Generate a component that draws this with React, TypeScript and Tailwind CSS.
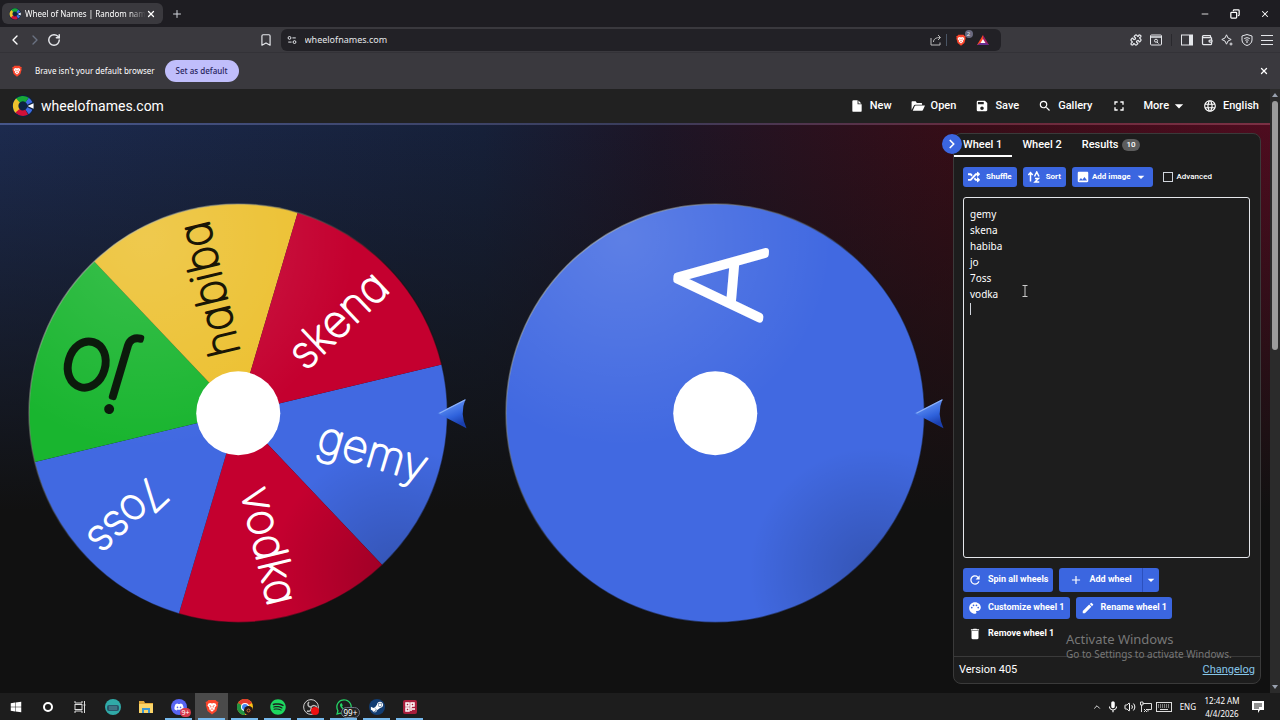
import * as React from "react";
import {
  Bookmark,
  ChevronLeft,
  ChevronRight,
  ChevronUp,
  Copy,
  Minus,
  Plus,
  Puzzle,
  RotateCw,
  Volume2,
  Wallet,
  X,
} from "lucide-react";
import { FaDiscord, FaRandom, FaSteamSymbol, FaSpotify, FaWhatsapp, FaWindows } from "react-icons/fa";
import {
  MdArrowDropDown,
  MdAdd,
  MdDelete,
  MdEdit,
  MdFullscreen,
  MdImage,
  MdLanguage,
  MdMic,
  MdPalette,
  MdRefresh,
  MdSave,
  MdSearch,
} from "react-icons/md";

type Slice = {
  label: string;
  fill: string;
  ink: string;
  size: number;
  stroke: number;
  end: number;
  baseline: number;
};

const BLUE = "#4169e1";
const RED = "#c4002f";

const SLICES: Slice[] = [
  { label: "gemy", fill: BLUE, ink: "#fff", size: 44, stroke: 2, end: 196, baseline: 14 },
  { label: "vodka", fill: RED, ink: "#fff", size: 44, stroke: 2, end: 196, baseline: 16 },
  { label: "7oss", fill: BLUE, ink: "#fff", size: 43, stroke: 2, end: 196, baseline: 16 },
  { label: "jo", fill: "#19b52f", ink: "#0c1a0c", size: 86, stroke: 6, end: 184, baseline: 27 },
  { label: "habiba", fill: "#ecc02f", ink: "#1a1606", size: 44, stroke: 2, end: 196, baseline: 16 },
  { label: "skena", fill: RED, ink: "#fff", size: 44, stroke: 2, end: 196, baseline: 16 },
];

const SECOND: Slice[] = [
  { label: "A", fill: BLUE, ink: "#fff", size: 118, stroke: 7, end: 169, baseline: 36 },
];

const RADIUS = 209;

function slicePath(from: number, to: number) {
  const a = (from * Math.PI) / 180;
  const b = (to * Math.PI) / 180;
  return `M0 0L${RADIUS * Math.cos(a)} ${RADIUS * Math.sin(a)}A${RADIUS} ${RADIUS} 0 0 1 ${
    RADIUS * Math.cos(b)
  } ${RADIUS * Math.sin(b)}Z`;
}

function Wheel({ id, slices, turn }: { id: string; slices: Slice[]; turn: number }) {
  const step = 360 / slices.length;
  return (
    <svg viewBox="-238 -220 476 440" className="w-full" role="img" aria-label={id}>
      <defs>
        <radialGradient id={`${id}-light`} cx="0.28" cy="0.08" r="0.5">
          <stop offset="0" stopColor="#fff" stopOpacity="0.15" />
          <stop offset="1" stopColor="#fff" stopOpacity="0" />
        </radialGradient>
        <radialGradient id={`${id}-shade`} cx="0.88" cy="0.88" r="0.3">
          <stop offset="0" stopColor="#000" stopOpacity="0.2" />
          <stop offset="1" stopColor="#000" stopOpacity="0" />
        </radialGradient>
        <linearGradient id={`${id}-rim`} x1="0" y1="0" x2="1" y2="1">
          <stop offset="0.1" stopColor="#d6dccb" stopOpacity="0.5" />
          <stop offset="0.5" stopColor="#111" stopOpacity="0.5" />
        </linearGradient>
        <linearGradient id={`${id}-pin`} x1="0" y1="0" x2="0.4" y2="1">
          <stop offset="0.3" stopColor="#5b8bf0" />
          <stop offset="0.7" stopColor="#2f62dc" />
          <stop offset="1" stopColor="#1a3fae" />
        </linearGradient>
      </defs>
      {slices.length === 1 ? (
        <circle r={RADIUS} fill={slices[0].fill} />
      ) : (
        slices.map((slice, i) => (
          <path
            key={slice.label}
            d={slicePath(turn + step * (i - 0.5), turn + step * (i + 0.5))}
            fill={slice.fill}
          />
        ))
      )}
      <circle r={RADIUS} fill={`url(#${id}-light)`} />
      <circle r={RADIUS} fill={`url(#${id}-shade)`} />
      <circle r={RADIUS} fill="none" stroke={`url(#${id}-rim)`} strokeWidth="1.500" />
      {slices.map((slice, i) => (
        <text
          key={slice.label}
          x={slice.end}
          y={slice.baseline}
          textAnchor="end"
          transform={`rotate(${turn + step * i})`}
          fontSize={slice.size}
          fill={slice.ink}
          stroke={slice.ink}
          strokeWidth={slice.stroke}
          strokeLinejoin="round"
          className="font-['Inter',sans-serif] font-thin [font-feature-settings:'cv11']"
        >
          {slice.label}
        </text>
      ))}
      <circle r="42" fill="#fff" />
      <path d="M199 0L227 -14Q221 0 228 15Z" fill={`url(#${id}-pin)`} />
      <path d="M201 0L227 -13.500" stroke="#8fb2f7" strokeWidth="1" />
    </svg>
  );
}

function SiteLogo({ className }: { className: string }) {
  return (
    <svg viewBox="0 0 24 24" className={className} aria-hidden="true">
      <circle cx="12" cy="12" r="12" fill="#0d2340" />
      <g fill="none" strokeWidth="6">
        <path d="M16.500 5.500A8 8 0 0 1 16.500 18.500" stroke="#3f6be2" />
        <path d="M6 6.500A8 8 0 0 1 16.500 5.500" stroke="#16a838" />
        <path d="M6.800 18A8 8 0 0 1 6.500 6" stroke="#eec22d" />
        <path d="M16 18.800A8 8 0 0 1 6 17.200" stroke="#d0103a" />
      </g>
      <path d="M14 12L24 7V17Z" fill="#0d2340" />
      <path d="M17 12L23.500 9V15Z" fill="#fff" />
    </svg>
  );
}

function Lion({ className }: { className: string }) {
  return (
    <svg viewBox="0 0 16 16" className={className} aria-hidden="true">
      <path
        d="M4.500 1H11.500L13 2.500L14.500 3L13.800 5L14.200 6L12.500 12L8 15.500L3.500 12L1.800 6L2.200 5L1.500 3L3 2.500Z"
        fill="#fb452b"
      />
      <path
        d="M4.500 4.500L6.500 4L8 4.500L9.500 4L11.500 4.500L12.500 6.500L10.500 9L11 10L8 12.800L5 10L5.500 9L3.500 6.500Z"
        fill="#fff"
      />
      <path
        d="M5.500 6.500L7 7.200L6.800 8.500M10.500 6.500L9 7.200L9.200 8.500M6.700 10.500L8 9.800L9.300 10.500"
        fill="none"
        stroke="#fb452b"
        strokeWidth="0.800"
      />
    </svg>
  );
}

function BrowserChrome() {
  return (
    <div className="bg-[#3a393e] font-['Noto_Sans',sans-serif] text-white">
      <div className="flex h-[27px] items-center bg-[#1e1d22] pl-0.5">
        <div className="flex h-[21px] w-[161px] items-center rounded-md bg-[#3a393e] px-[7px]">
          <SiteLogo className="h-3 w-3 shrink-0" />
          <span className="ml-1 flex-1 whitespace-nowrap text-[8px] leading-4 [mask-image:linear-gradient(to_right,#000_85%,transparent)]">
            Wheel of Names | Random nam
          </span>
          <button type="button" aria-label="Close tab">
            <X className="h-2.5 w-2.5" strokeWidth={3} />
          </button>
        </div>
        <button type="button" aria-label="New tab" className="ml-2 text-gray-300">
          <Plus className="h-3 w-3" />
        </button>
        <div className="ml-auto flex items-center gap-5 pr-2.5">
          <Minus className="h-2.5 w-2.5" />
          <Copy className="h-2.5 w-2.5 -scale-x-100" strokeWidth={3} />
          <X className="h-2.5 w-2.5" strokeWidth={2.5} />
        </div>
      </div>

      <div className="flex h-[26px] items-center border-b border-[#333237] px-[7px] text-gray-200">
        <button type="button" aria-label="Back">
          <ChevronLeft className="h-4 w-4 text-white" />
        </button>
        <button type="button" aria-label="Forward" className="ml-1 text-gray-500">
          <ChevronRight className="h-4 w-4" />
        </button>
        <button type="button" aria-label="Reload" className="ml-1">
          <RotateCw className="h-3.5 w-3.5" strokeWidth={2.5} />
        </button>
        <div className="flex flex-1 items-center justify-center">
          <button type="button" aria-label="Bookmark" className="mr-2 pl-[68px]">
            <Bookmark className="h-3.5 w-3.5" />
          </button>
          <div className="flex h-[22px] w-[720px] items-center rounded-md bg-[#222126] px-1.5">
            <svg viewBox="0 0 12 12" className="h-2.5 w-2.5" fill="none" stroke="currentColor" strokeWidth="1.200">
              <circle cx="3" cy="3.500" r="1.700" />
              <path d="M6.500 3.500H10.500M1.500 8.500H5.500" />
              <circle cx="9" cy="8.500" r="1.700" />
            </svg>
            <input
              aria-label="Address"
              defaultValue="wheelofnames.com"
              className="ml-2 flex-1 bg-transparent text-[9px] leading-4 outline-none"
            />
            <svg viewBox="0 0 12 12" className="h-3 w-3" fill="none" stroke="#bbb" strokeWidth="1">
              <path d="M1 4V11H10V8.500M3.500 8C3.500 5 6 3.500 10 3.500M8 1L10.500 3.500L8 6" />
            </svg>
            <span className="mx-1 h-3 w-px bg-gray-600" />
            <span className="relative ml-1">
              <Lion className="h-3 w-3" />
              <span className="absolute -right-1.5 -top-1 grid h-2 w-2 place-items-center rounded-full bg-[#6a6a80] text-[6px] leading-none">
                2
              </span>
            </span>
            <svg viewBox="0 0 12 12" className="ml-2.5 mr-1.5 h-3 w-3">
              <path d="M6 1L0 11H6V7Z" fill="#ff4724" />
              <path d="M6 1L12 11H6V7Z" fill="#9e1f63" />
              <path d="M0 11H12L9 9H3Z" fill="#662d91" />
              <path d="M6 5L8.500 9H3.500Z" fill="#fff" />
            </svg>
          </div>
        </div>
        <div className="flex items-center gap-2">
          <Puzzle className="h-3 w-3" strokeWidth={2.5} />
          <svg viewBox="0 0 12 12" className="h-3 w-3" fill="none" stroke="currentColor">
            <rect x="0.500" y="1" width="11" height="10" rx="1" />
            <path d="M1 3H11" strokeWidth="1.500" />
            <circle cx="6" cy="6.700" r="1.500" />
            <path d="M7 8L8.500 9.500" />
          </svg>
          <span className="mx-px h-3 w-px bg-[#29282d]" />
          <svg viewBox="0 0 12 12" className="h-3 w-3" fill="none" stroke="currentColor">
            <rect x="0.500" y="1" width="11" height="10" />
            <path d="M8 1H12V11H8Z" fill="currentColor" stroke="none" />
          </svg>
          <Wallet className="h-3 w-3" strokeWidth={2.5} />
          <svg viewBox="0 0 12 12" className="h-3 w-3" fill="none" stroke="currentColor">
            <path d="M5.500 0.800Q6.200 4.800 10.200 5.500Q6.200 6.200 5.500 10.200Q4.800 6.200 0.800 5.500Q4.800 4.800 5.500 0.800Z" />
            <path d="M10 8.500V11.500M8.500 10H11.500" />
          </svg>
          <svg viewBox="0 0 12 12" className="h-3 w-3" fill="none" stroke="currentColor">
            <path d="M6 0.500L11 2V6C11 9 8.500 10.800 6 11.500C3.500 10.800 1 9 1 6V2Z" />
            <path d="M3.200 4.500Q6 2.800 8.800 4.500M4.300 6.300Q6 5.300 7.700 6.300" />
            <circle cx="6" cy="8" r="0.500" />
          </svg>
          <svg viewBox="0 0 12 12" className="h-3 w-3" stroke="currentColor">
            <path d="M0 1.500H12M0 6.500H12M0 10.500H12" />
          </svg>
        </div>
      </div>

      <div className="flex h-9 items-center px-[11px]">
        <Lion className="h-3 w-3" />
        <span className="ml-3 text-[8px] leading-4">Brave isn't your default browser</span>
        <button
          type="button"
          className="ml-2.5 h-[22px] rounded-full bg-[#c0befb] px-[11px] text-[8px] font-medium text-[#26235c]"
        >
          Set as default
        </button>
        <button type="button" aria-label="Dismiss" className="ml-auto">
          <X className="h-2.5 w-2.5" strokeWidth={3} />
        </button>
      </div>
    </div>
  );
}

function SiteHeader() {
  return (
    <header className="flex h-[34px] items-center bg-[#212121] pb-px pl-3 pr-[11px] text-white">
      <SiteLogo className="h-[22px] w-[22px]" />
      <a href="#home" className="ml-[7px] text-[14px] leading-5">
        wheelofnames.com
      </a>
      <nav className="ml-auto flex items-center text-[11px] font-medium leading-4">
        <button type="button" className="mr-[19px] flex items-center gap-1.5">
          <svg viewBox="0 0 24 24" className="h-3.5 w-3.5" fill="currentColor">
            <path d="M6 2H13V9H20V20Q20 22 18 22H6Q4 22 4 20V4Q4 2 6 2ZM14.500 2.500L19.500 7.500H14.500Z" />
          </svg>
          New
        </button>
        <button type="button" className="mr-[19px] flex items-center gap-1.5">
          <svg viewBox="0 0 24 24" className="h-3.5 w-3.5" fill="currentColor">
            <path d="M1 19V5Q1 4 2 4H8L10 7H18Q19 7 19 8V10H7Q5.500 10 5 11ZM3 20L6.500 12Q7 11 8 11H24L20.500 19Q20 20 19 20Z" />
          </svg>
          Open
        </button>
        <button type="button" className="mr-[19px] flex items-center gap-1.5">
          <MdSave className="h-3.5 w-3.5" /> Save
        </button>
        <button type="button" className="mr-[19px] flex items-center gap-1.5">
          <MdSearch className="h-3.5 w-3.5" /> Gallery
        </button>
        <button type="button" aria-label="Fullscreen" className="mr-4">
          <MdFullscreen className="h-4 w-4" />
        </button>
        <button type="button" className="mr-3.5 flex items-center">
          More <MdArrowDropDown className="h-5 w-5" />
        </button>
        <button type="button" className="flex items-center gap-1.5">
          <MdLanguage className="h-3.5 w-3.5" /> English
        </button>
      </nav>
    </header>
  );
}

const NAMES = ["gemy", "skena", "habiba", "jo", "7oss", "vodka", ""].join("\n");

function Panel() {
  const [names, setNames] = React.useState(NAMES);

  return (
    <aside className="relative mr-[9px] mt-2 flex w-[308px] shrink-0 flex-col self-stretch rounded-lg border border-[#3a3a3a] bg-[#1d1d1d] text-white">
      <button
        type="button"
        aria-label="Hide panel"
        className="absolute -left-3 top-0 grid h-5 w-5 place-items-center rounded-full bg-[#3b66e0]"
      >
        <ChevronRight className="h-3.5 w-3.5" strokeWidth={3} />
      </button>
      <div role="tablist" className="flex h-[23px] text-[11px] font-medium leading-5">
        <button type="button" role="tab" aria-selected="true" className="border-b-2 border-white pl-[9px] pr-2.5">
          Wheel 1
        </button>
        <button type="button" role="tab" aria-selected="false" className="ml-2.5 border-b-2 border-transparent">
          Wheel 2
        </button>
        <button
          type="button"
          role="tab"
          aria-selected="false"
          className="ml-5 flex items-center gap-1 border-b-2 border-transparent"
        >
          Results
          <span className="rounded-full bg-[#5c5c5c] px-1 text-[8px] leading-3">10</span>
        </button>
      </div>

      <div className="flex flex-1 flex-col pl-[9px] pr-2.5 pt-2.5">
        <div className="flex h-5 items-center gap-1.5 text-[8px] font-bold">
          <button type="button" className="flex h-5 items-center gap-1.5 rounded-[3px] bg-[#3b66e0] px-[5px]">
            <FaRandom className="h-3 w-3" /> Shuffle
          </button>
          <button type="button" className="flex h-5 items-center gap-1.5 rounded-[3px] bg-[#3b66e0] px-[5px]">
            <svg viewBox="0 0 24 24" className="h-3 w-3" fill="none" stroke="currentColor" strokeWidth="3">
              <path d="M5 21V4M0.500 8L5 3L9.500 8M13 11L17.500 2L22 11M14 15H21L14 22H22.500" />
            </svg>
            Sort
          </button>
          <button type="button" className="flex h-5 items-center gap-0.5 rounded-[3px] bg-[#3b66e0] px-1">
            <MdImage className="h-3.5 w-3.5" /> Add image <MdArrowDropDown className="h-4 w-4" />
          </button>
          <label className="ml-1 flex items-center gap-1 font-medium">
            <input type="checkbox" className="h-2.5 w-2.5 appearance-none border border-gray-300" />
            Advanced
          </label>
        </div>

        <div className="relative mt-2.5 flex flex-1">
          <textarea
            aria-label="Names"
            value={names}
            onChange={(event) => setNames(event.target.value)}
            className="w-full resize-none rounded-[3px] border border-gray-200 bg-[#1d1d1d] px-1.5 py-2 font-['Noto_Sans',sans-serif] text-[10px] leading-4 outline-none"
          />
          <span className="absolute left-[7px] top-[106px] h-3 w-px bg-gray-300" />
          <svg viewBox="0 0 6 12" className="absolute left-[59px] top-[88px] h-3 w-1.5" fill="none" stroke="#ccc">
            <path d="M0.500 0.500H5.500M0.500 11.500H5.500M3 0.500V11.500" />
          </svg>
        </div>

        <div className="mt-2.5 flex gap-1.5 text-[9px] font-bold">
          <button type="button" className="flex h-6 items-center gap-1.5 rounded-[3px] bg-[#3b66e0] px-[5px]">
            <MdRefresh className="h-3.5 w-3.5" /> Spin all wheels
          </button>
          <div className="flex rounded-[3px] bg-[#3b66e0]">
            <button type="button" className="flex h-6 items-center gap-1.5 px-2.5">
              <MdAdd className="h-3.5 w-3.5" /> Add wheel
            </button>
            <button type="button" aria-label="More wheel options" className="border-l border-[#2c50bd]">
              <MdArrowDropDown className="h-4 w-4" />
            </button>
          </div>
        </div>
        <div className="mt-[5px] flex gap-1.5 text-[9px] font-bold">
          <button type="button" className="flex h-[22px] items-center gap-1.5 rounded-[3px] bg-[#3b66e0] px-[5px]">
            <MdPalette className="h-3.5 w-3.5" /> Customize wheel 1
          </button>
          <button type="button" className="flex h-[22px] items-center gap-1.5 rounded-[3px] bg-[#3b66e0] px-[5px]">
            <MdEdit className="h-3.5 w-3.5" /> Rename wheel 1
          </button>
        </div>
        <button type="button" className="mb-3 mt-[5px] flex h-5 items-center gap-1.5 px-[5px] text-[9px] font-bold">
          <MdDelete className="h-3.5 w-3.5" /> Remove wheel 1
        </button>
      </div>

      <div className="flex h-[27px] items-center justify-between border-t border-[#3a3a3a] px-[5px] text-[11px]">
        <span>Version 405</span>
        <a href="#changelog" className="text-[#85c5e8] underline">
          Changelog
        </a>
      </div>

      <div className="pointer-events-none absolute bottom-[22px] left-[112px] whitespace-nowrap font-['Noto_Sans',sans-serif] text-[#777]">
        <p className="text-[13px] leading-4">Activate Windows</p>
        <p className="text-[10px] leading-[14px]">Go to Settings to activate Windows.</p>
      </div>
    </aside>
  );
}

function TaskItem({ label, active, children }: { label: string; active?: boolean; children: React.ReactNode }) {
  return (
    <button
      type="button"
      aria-label={label}
      className={`relative grid h-full w-[33px] place-items-center ${active ? "bg-[#4a4a4a]" : ""}`}
    >
      {children}
      <span className="absolute inset-x-[3px] bottom-0 h-0.5 bg-[#76b9ed]" />
    </button>
  );
}

function Taskbar() {
  return (
    <footer className="flex h-[27px] items-center bg-[#1d1d1d] font-['Noto_Sans',sans-serif] text-white">
      <button type="button" aria-label="Start" className="grid w-8 place-items-center">
        <FaWindows className="h-3 w-3" />
      </button>
      <button type="button" aria-label="Cortana" className="grid w-8 place-items-center">
        <span className="h-2.5 w-2.5 rounded-full border-2 border-white" />
      </button>
      <button type="button" aria-label="Task view" className="grid w-8 place-items-center">
        <svg viewBox="0 0 12 12" className="h-3 w-3" fill="none" stroke="#ddd">
          <path d="M1 0V2H8V0M1 12V10H8V12M10.500 0V12M9.500 4H11.500" />
          <rect x="1" y="3.500" width="7" height="5" />
        </svg>
      </button>
      <button type="button" aria-label="Browser" className="grid w-[33px] place-items-center">
        <svg viewBox="0 0 16 16" className="h-4 w-4">
          <circle cx="8" cy="8" r="8" fill="#30aaa8" />
          <rect x="2" y="6" width="12" height="6" rx="2" fill="#28566a" />
          <path d="M4 8H12M4 10H12" stroke="#598d9b" />
        </svg>
      </button>
      <button type="button" aria-label="File Explorer" className="grid w-[33px] place-items-center">
        <svg viewBox="0 0 16 14" className="h-3.5 w-4">
          <path d="M1 1H6L7 3H15V13H1Z" fill="#e2a93b" />
          <path d="M1 4H15V13H1Z" fill="#fbd569" />
          <path d="M4 13V8H12V13H10V10H6V13Z" fill="#3b97d3" />
        </svg>
      </button>
      <TaskItem label="Discord">
        <span className="relative grid h-4 w-4 place-items-center rounded-full bg-[#5865f2]">
          <FaDiscord className="h-2.5 w-2.5" />
          <span className="absolute -bottom-0.5 -right-1 rounded-full bg-[#d83c4c] px-px text-[7px] leading-[9px]">
            9+
          </span>
        </span>
      </TaskItem>
      <TaskItem label="Brave" active>
        <Lion className="h-4 w-4" />
      </TaskItem>
      <TaskItem label="Chrome">
        <svg viewBox="0 0 16 16" className="h-4 w-4">
          <circle cx="8" cy="8" r="8" fill="#fbc116" />
          <path d="M8 8L1 4A8 8 0 0 1 15 4Z" fill="#e33b2e" />
          <path d="M8 8L1 4A8 8 0 0 0 8 16Z" fill="#229342" />
          <circle cx="8" cy="8" r="4" fill="#fff" />
          <circle cx="8" cy="8" r="3" fill="#4285f4" />
          <circle cx="11.500" cy="11.500" r="4.500" fill="#261818" />
          <circle cx="11.500" cy="11.500" r="1.500" fill="none" stroke="#d57233" />
        </svg>
      </TaskItem>
      <TaskItem label="Spotify">
        <FaSpotify className="h-4 w-4 text-[#1ed760]" />
      </TaskItem>
      <TaskItem label="OBS Studio">
        <svg viewBox="0 0 16 16" className="h-4 w-4">
          <circle cx="8" cy="8" r="7.400" fill="#222" stroke="#ccc" />
          <path d="M8 8C5 8 4 5 6 3M8 8C10 6 13 6 14 9M8 8C9 11 7 13 4 12" stroke="#bbb" strokeWidth="1.500" fill="none" />
          <circle cx="12" cy="12" r="4" fill="#ee1111" />
        </svg>
      </TaskItem>
      <TaskItem label="WhatsApp">
        <span className="relative">
          <FaWhatsapp className="h-[18px] w-[18px] text-[#25d366]" />
          <span className="absolute -bottom-0.5 left-1.5 rounded-full border border-gray-500 bg-[#222] px-0.5 text-[8px] leading-[9px]">
            99+
          </span>
        </span>
      </TaskItem>
      <TaskItem label="Steam">
        <span className="grid h-4 w-4 place-items-center rounded-full bg-[#123d72]">
          <FaSteamSymbol className="h-3.5 w-3.5" />
        </span>
      </TaskItem>
      <TaskItem label="Recorder">
        <svg viewBox="0 0 16 16" className="h-4 w-4">
          <rect x="1" y="1" width="14" height="14" rx="2" fill="#a81e3c" />
          <path d="M4 4H7V7H4ZM9 12V4H12V7H9M4 9H7V12H4ZM10 10H13" fill="none" stroke="#fff" strokeWidth="1.500" />
        </svg>
      </TaskItem>

      <div className="ml-auto flex items-center gap-1 pr-4">
        <ChevronUp className="h-2.5 w-2.5" />
        <MdMic className="h-3.5 w-3.5" />
        <Volume2 className="h-3 w-3" />
        <svg viewBox="0 0 12 12" className="h-3 w-3" fill="none" stroke="#ddd">
          <path d="M3 2.500H11.500V8.500H6M0.500 1V4H3V1ZM1.500 4V11M8 8.500V10.500M4 11L7 8M4 8L7 11" />
        </svg>
        <svg viewBox="0 0 16 10" className="h-2.5 w-4" fill="none" stroke="#ddd">
          <rect x="0.500" y="0.500" width="15" height="9" />
          <path d="M2 3H14M2 5H14" strokeDasharray="1 1" />
          <path d="M4 7.500H12" />
        </svg>
        <span className="ml-1 text-[8px]">ENG</span>
        <div className="ml-1 w-9 whitespace-nowrap text-center text-[8px] leading-[13px]">
          <p>12:42 AM</p>
          <p>4/4/2026</p>
        </div>
        <svg viewBox="0 0 12 12" className="ml-2 h-3 w-3">
          <path d="M0 0H12V9H8L6 12V9H0Z" fill="#fff" />
          <path d="M2 3H10M2 5H10M2 7H7" stroke="#222" />
        </svg>
      </div>
    </footer>
  );
}

export default function App() {
  return (
    <div className="flex min-h-screen flex-col bg-[#111] font-['Roboto',sans-serif]">
      <BrowserChrome />
      <div className="flex flex-1">
        <div className="flex min-w-0 flex-1 flex-col">
          <SiteHeader />
          <div className="h-0.5 bg-[linear-gradient(to_right,#46568a,#3a3d5c_50%,#6b2a3c_80%,#7a3044)]" />
          <main className="flex flex-1 bg-[linear-gradient(to_bottom,transparent,#111_68%),linear-gradient(to_right,#1c2a4e,#162039_38%,#1d1526_52%,#360d17_75%,#4e0c1f)] pb-[9px]">
            <div className="grid min-w-0 flex-1 grid-cols-2 items-center pt-[18px]">
              <Wheel id="wheel-1" slices={SLICES} turn={16.5} />
              <Wheel id="wheel-2" slices={SECOND} turn={-85} />
            </div>
            <Panel />
          </main>
        </div>
        <div className="flex w-2.5 flex-col items-center bg-[#2b2b2b] py-1">
          <span className="h-0 w-0 border-x-[3px] border-b-4 border-x-transparent border-b-gray-400" />
          <div className="mt-1 h-[249px] w-1.5 rounded-full bg-[#9c9c9c]" />
          <span className="mt-auto h-0 w-0 border-x-[3px] border-t-4 border-x-transparent border-t-gray-400" />
        </div>
      </div>
      <Taskbar />
    </div>
  );
}
